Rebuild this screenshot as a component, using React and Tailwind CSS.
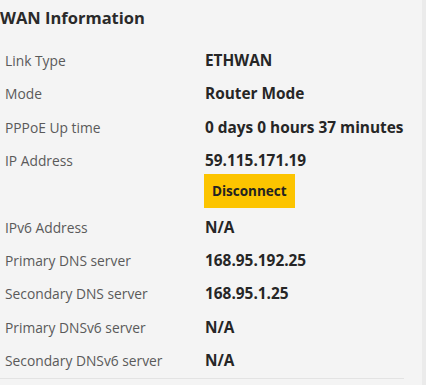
import React from 'react';

const rows = [
  { label: 'Link Type', value: 'ETHWAN' },
  { label: 'Mode', value: 'Router Mode' },
  { label: 'PPPoE Up time', value: '0 days 0 hours 37 minutes' },
  { label: 'IP Address', value: '59.115.171.19', action: 'Disconnect' },
  { label: 'IPv6 Address', value: 'N/A' },
  { label: 'Primary DNS server', value: '168.95.192.25' },
  { label: 'Secondary DNS server', value: '168.95.1.25' },
  { label: 'Primary DNSv6 server', value: 'N/A' },
  { label: 'Secondary DNSv6 server', value: 'N/A' },
];

export default function App() {
  return (
    <div
      className="flex w-[426px] h-[385px] bg-[#f4f4f4] overflow-hidden"
      style={{ fontFamily: '"Open Sans", "DejaVu Sans", sans-serif' }}
    >
      <div className="flex-1 flex flex-col">
        <h2 className="pt-[7px] text-[16.5px] font-bold text-[#2a2a2a] leading-[22px]">WAN Information</h2>
        <div className="w-[404px] mt-[23px] border-b border-[#e3e3e3]">
          {rows.map((r, i) => (
            <div
              key={r.label}
              className={`flex items-start ${i === rows.length - 1 ? 'min-h-[26px]' : 'min-h-[33.25px]'}`}
            >
              <div className="w-[205px] shrink-0 pl-[5px] text-[13.8px] leading-[18px] text-[#5a5a5a]">{r.label}</div>
              <div className="flex flex-col items-start">
                <span className="text-[15.4px] leading-[18px] font-bold text-[#262626]">{r.value}</span>
                {r.action && (
                  <button className="-ml-px mt-[4px] mb-[11px] h-[34px] px-[8px] bg-[#fcc400] text-[13.5px] font-bold text-[#222]">
                    {r.action}
                  </button>
                )}
              </div>
            </div>
          ))}
        </div>
      </div>
      <div className="w-[4px] bg-[#ebebeb]" />
    </div>
  );
}
